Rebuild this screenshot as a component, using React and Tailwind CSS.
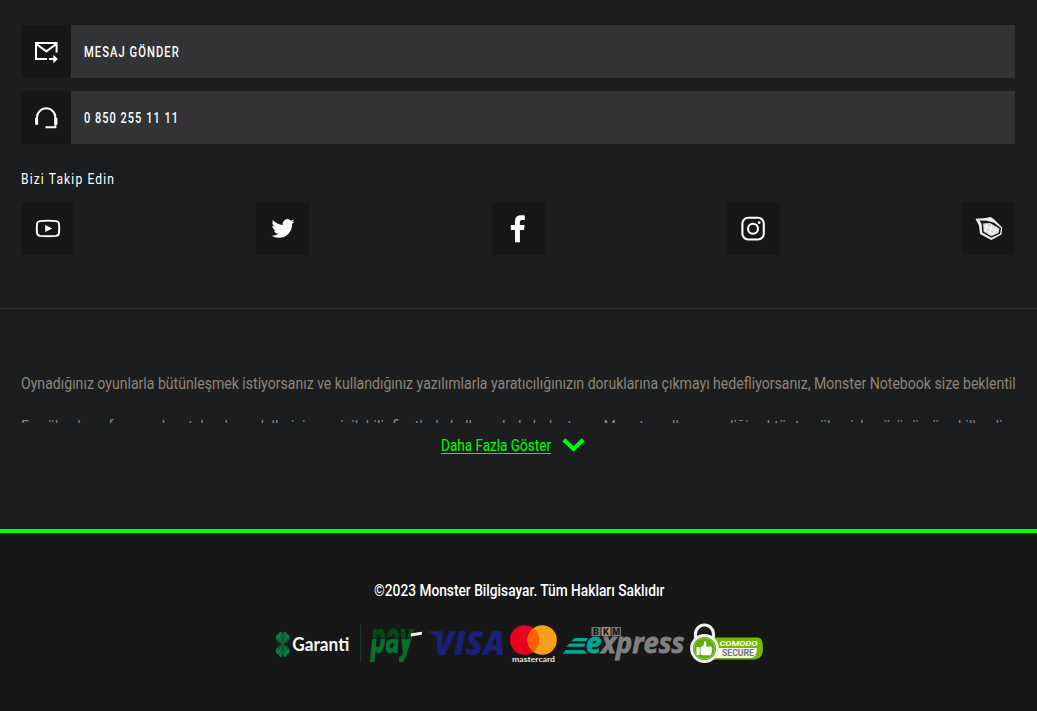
import { useLayoutEffect, useRef } from "react";

// Condenses a single line of text to the width of its box.
function Fit({ children, className = "", textClass = "" }) {
  const box = useRef(null);
  const text = useRef(null);
  useLayoutEffect(() => {
    const s = box.current.clientWidth / text.current.offsetWidth;
    text.current.style.transform = `scaleX(${s})`;
  }, []);
  return (
    <div ref={box} className={`shrink-0 whitespace-nowrap ${className}`}>
      <span ref={text} className={`inline-block origin-left ${textClass}`}>{children}</span>
    </div>
  );
}

function MailIcon() {
  return (
    <svg className="h-[26px] w-[26px]" viewBox="0 -0.5 26 26" fill="none" stroke="#fff" strokeWidth="2">
      <path d="M14 19.500H3V3.500H23.600V13M3 4.300l10.300 7.600L23.600 4.300" />
      <path d="M16 19.500h5" />
      <path d="M20.300 15.200l4.600 4.300-4.600 4.300z" fill="#fff" stroke="none" />
    </svg>
  );
}

function HeadsetIcon() {
  return (
    <svg className="h-[26px] w-[26px]" viewBox="0 -0.5 26 26" fill="none" stroke="#fff" strokeWidth="2">
      <path d="M4 15v-3a9.200 9.200 0 0 1 18.400 0v9.700H12.500" />
      <path d="M3.600 12.500v6.800M22.900 12.500v6.800" strokeWidth="3" />
    </svg>
  );
}

function YoutubeIcon() {
  return (
    <svg className="h-[26px] w-[26px]" viewBox="0 0.5 26 26">
      <path d="M5 5.600Q13 4.600 21 5.600Q23.800 5.900 24 8.500Q24.500 13 24 17.400Q23.800 20 21 20.400Q13 21.200 5 20.400Q2.300 20 2 17.400Q1.500 13 2 8.500Q2.300 5.900 5 5.600Z" fill="none" stroke="#fff" strokeWidth="1.900" />
      <path d="M10.200 9.400l7 3.600-7 3.600z" fill="#fff" />
    </svg>
  );
}

function TwitterIcon() {
  return (
    <svg className="h-[23px] w-[23px]" viewBox="-0.5 0 24 24" fill="#fff">
      <path d="M23.953 4.57a10 10 0 01-2.825.775 4.958 4.958 0 002.163-2.723c-.951.555-2.005.959-3.127 1.184a4.92 4.92 0 00-8.384 4.482C7.69 8.095 4.067 6.13 1.64 3.162a4.822 4.822 0 00-.666 2.475c0 1.71.87 3.213 2.188 4.096a4.904 4.904 0 01-2.228-.616v.06a4.923 4.923 0 003.946 4.827 4.996 4.996 0 01-2.212.085 4.936 4.936 0 004.604 3.417 9.867 9.867 0 01-6.102 2.105c-.39 0-.779-.023-1.17-.067a13.995 13.995 0 007.557 2.209c9.053 0 13.998-7.496 13.998-13.985 0-.21 0-.42-.015-.63A9.935 9.935 0 0024 4.59z" />
    </svg>
  );
}

function FacebookIcon() {
  return (
    <svg className="h-[28px] w-[16px]" viewBox="0 0.5 16 28" fill="#fff">
      <path d="M5 27.800V15.600H.8v-5H5V7C5 2.800 7.200.8 11 .8c1.700 0 3 .1 3.800.2v4.400h-2.500c-2 0-2.400 1-2.400 2.400v2.800h4.700l-.6 5H9.900v12.200z" />
    </svg>
  );
}

function InstagramIcon() {
  return (
    <svg className="h-[26px] w-[26px]" viewBox="0 0.5 26 26" fill="none" stroke="#fff" strokeWidth="2.100">
      <rect x="2.400" y="2.200" width="21.400" height="21.800" rx="5.800" />
      <circle cx="13" cy="13.200" r="5" />
      <circle cx="19.200" cy="7.100" r="1.400" fill="#fff" stroke="none" />
    </svg>
  );
}

function MonsterIcon() {
  return (
    <svg className="h-[26px] w-[28px]" viewBox="0 0.8 28 26">
      <path d="M.5 3.500L9 3.100 15.600 1.900 19 4 27.200 12.300 26.500 19.200 16.300 24.700 5 18.800 4 10.500Z" fill="#eee" />
      <path d="M4.500 5.200L12 5.500 19 7.500 26 12.800 25 18.600 16.300 22.500 7.200 17.400 6.600 8.700Z" fill="#171717" />
      <path d="M8 8.400L15 7.900 24.400 13.200 23.600 17.800 16.300 21 8.700 16.600Z" fill="#d9d9d9" />
      <path d="M9 10.500l14 5.500M9.500 14l9 5M12 8.500l-2 8M17 9.500l-3 10M21.500 12l-3 7" fill="none" stroke="#fff" strokeWidth=".9" />
    </svg>
  );
}

function Garanti() {
  return (
    <svg className="h-[42px] w-[88px]" viewBox="274 622 88 42">
      <defs>
        <linearGradient id="leaf" x1="0" y1="0" x2="0" y2="1">
          <stop offset="0" stopColor="#0d7d48" />
          <stop offset="1" stopColor="#054326" />
        </linearGradient>
      </defs>
      <g fill="url(#leaf)">
        {[33, 147, 213, 327].map((a) => (
          <g key={a} transform={`translate(282.700 644.300) scale(.92 1.400) rotate(${a})`}>
            <path d="M0 0C-3-2.500-5-6-3.500-8.500Q-1.500-10 0-8.500Q1.500-10 3.500-8.500C5-6 3-2.500 0 0Z" />
          </g>
        ))}
      </g>
      <path d="M278 635l9.500 18M287.500 635l-9.500 18" stroke="#4c9a68" strokeWidth=".6" opacity=".7" />
      <text x="292.300" y="651" fontFamily="Lato, sans-serif" fontWeight="700" fontSize="19.500" fill="#f4f4f4" textLength="57" lengthAdjust="spacingAndGlyphs">Garanti</text>
      <path d="M360.500 625v37" stroke="#123c26" strokeWidth="1" />
    </svg>
  );
}

function Pay() {
  return (
    <svg className="h-[42px] w-[62px] overflow-visible" viewBox="365 622 62 42">
      <defs>
        <linearGradient id="payFill" gradientUnits="userSpaceOnUse" x1="0" y1="-20" x2="0" y2="0">
          <stop offset=".5" stopColor="#004b18" />
          <stop offset=".52" stopColor="#03702d" />
        </linearGradient>
      </defs>
      <g transform="translate(371 652.500) scale(1 1.480)">
        <text x="0" y="0" fontFamily="Roboto, sans-serif" fontWeight="900" fontStyle="italic" fontSize="30" fill="url(#payFill)" textLength="42" lengthAdjust="spacingAndGlyphs">pay</text>
      </g>
      <path d="M371 638.200h40" stroke="#171717" strokeWidth=".9" />
      <path d="M411 633.200l11.200-1.400-.5 3-11 1.700z" fill="#f4f4f4" />
    </svg>
  );
}

function Visa() {
  return (
    <svg className="h-[42px] w-[80px] overflow-visible" viewBox="427 622 80 42">
      <path d="M428 631.300H438Q440 631.500 440.600 634L441.500 643Q436 634 428 632Z" fill="#1a1f78" />
      <text x="434" y="655.300" fontFamily="Open Sans, sans-serif" fontWeight="800" fontStyle="italic" fontSize="33.500" fill="#1a1f78" textLength="71" lengthAdjust="spacingAndGlyphs">VISA</text>
    </svg>
  );
}

function Mastercard() {
  return (
    <svg className="h-[42px] w-[52px]" viewBox="507 622 52 42">
      <circle cx="524.700" cy="640" r="14.700" fill="#eb001b" />
      <circle cx="542.200" cy="640" r="14.700" fill="#f79e1b" />
      <path d="M533.450 628.200a14.700 14.700 0 0 1 0 23.600a14.700 14.700 0 0 1 0-23.600z" fill="#ff5f00" />
      <text x="512" y="661.500" fontFamily="Lato, sans-serif" fontWeight="700" fontSize="7.800" fill="#e4e4e4" textLength="43" lengthAdjust="spacingAndGlyphs">mastercard</text>
    </svg>
  );
}

function BkmExpress() {
  return (
    <svg className="h-[42px] w-[127px] overflow-visible" viewBox="559 622 127 42">
      <rect x="591.500" y="627" width="9" height="9" fill="#777" />
      <rect x="601.500" y="627" width="9" height="9" fill="#bd9160" />
      <rect x="611.500" y="627" width="9.500" height="9" fill="#777" />
      <g fontFamily="Roboto, sans-serif" fontWeight="900" fontSize="9" fill="#171717" textAnchor="middle">
        <text x="596" y="634.700">B</text>
        <text x="606" y="634.700">K</text>
        <text x="616.300" y="634.700">M</text>
      </g>
      <path d="M574.500 638H588l-2 3.300H571.500ZM569.500 643.500H585l-.6 3.200H566.500ZM565.500 650H584l3 3.700H563Z" fill="#00a797" />
      <g fontFamily="Open Sans, sans-serif" fontWeight="700" fontStyle="italic" fontSize="28.500" strokeWidth=".8">
        <text x="586" y="653.300" fill="#00a797" stroke="#00a797" textLength="15.500" lengthAdjust="spacingAndGlyphs">e</text>
        <text x="601.500" y="653.300" fill="#808080" stroke="#808080" textLength="83" lengthAdjust="spacingAndGlyphs">xpress</text>
      </g>
    </svg>
  );
}

function Comodo() {
  return (
    <svg className="h-[42px] w-[78px]" viewBox="686 622 78 42">
      <path d="M695.500 642V634a9 9 0 0 1 18 0v8" fill="none" stroke="#efefef" strokeWidth="3.200" />
      <path d="M705 637.500h53q5 0 5 10.500 0 11.500-10 11.500H705z" fill="#76b900" />
      <path d="M715 648h42q0 10-7 10H715z" fill="#f2f2f2" />
      <circle cx="704.500" cy="648.500" r="13" fill="#5eae13" stroke="#f2f2f2" strokeWidth="2.800" />
      <circle cx="704.500" cy="648.500" r="10.500" fill="none" stroke="#91cf3c" strokeWidth="1" />
      <path d="M696.500 647h3.200v8h-3.200zM700.500 647.500l3-2 .8-4.500q2.200 0 2.200 2.500l-.5 3h5q1.500.4 1.300 1.800l-1 5.500q-.3 1.500-1.800 1.500h-6l-3-.8z" fill="#fff" />
      <g fontFamily="Roboto, sans-serif" fontWeight="700">
        <text x="719.500" y="645.800" fontSize="7.500" fontStyle="italic" fill="#fff" textLength="38" lengthAdjust="spacingAndGlyphs">COMODO</text>
        <text x="722" y="656.200" fontSize="9.500" fill="#777" textLength="32" lengthAdjust="spacingAndGlyphs">SECURE</text>
      </g>
    </svg>
  );
}

function ContactRow({ icon, children }) {
  return (
    <a className="flex h-[53px] bg-[#323334]">
      <span className="flex w-[50px] items-center justify-center bg-[#171717]">{icon}</span>
      <span className="flex items-center pl-[13px] text-sm font-medium tracking-[1.3px]">{children}</span>
    </a>
  );
}

const socials = [YoutubeIcon, TwitterIcon, FacebookIcon, InstagramIcon, MonsterIcon];

export default function App() {
  return (
    <div className="flex h-[711px] w-full flex-col overflow-hidden bg-[#1c1d1e] font-['Roboto','Noto_Sans',sans-serif] text-white">
      <section className="flex h-[309px] shrink-0 flex-col border-b border-[#303132] pl-[21px] pr-[22px] pt-[25px]">
        <div className="flex flex-col gap-[13px]">
          <ContactRow icon={<MailIcon />}>
            <Fit className="w-[96px]">MESAJ GÖNDER</Fit>
          </ContactRow>
          <ContactRow icon={<HeadsetIcon />}>
            <Fit className="w-[95px]">0 850 255 11 11</Fit>
          </ContactRow>
        </div>
        <Fit className="mt-[25px] w-[94px] text-sm leading-5 tracking-[1.3px]">Bizi Takip Edin</Fit>
        <div className="mt-[13px] flex justify-between">
          {socials.map((Icon, i) => (
            <a key={i} className="flex size-[53px] items-center justify-center bg-[#171717]">
              <Icon />
            </a>
          ))}
        </div>
      </section>

      <section className="flex h-[220px] shrink-0 flex-col pl-[21px] pt-[53px]">
        <div className="h-[61px] overflow-hidden text-[17px] leading-[43px] text-[#8c857b]">
          <Fit className="w-[995px]">Oynadığınız oyunlarla bütünleşmek istiyorsanız ve kullandığınız yazılımlarla yaratıcılığınızın doruklarına çıkmayı hedefliyorsanız, Monster Notebook size beklentil</Fit>
          <Fit className="w-[986px]">En yüksek performanslı notebook modellerini en erişilebilir fiyatlarla kullanıcılarla buluşturan Monster, yılların verdiği sektör tecrübesiyle görünümü şekillendir</Fit>
        </div>
        <button className="mt-[10px] flex h-6 items-center self-center pr-[33px] text-[#00ff00]">
          <Fit className="w-[110px] text-[17px] leading-6" textClass="underline underline-offset-2">Daha Fazla Göster</Fit>
          <svg className="ml-[11px] h-[14px] w-[23px]" viewBox="0 0 23 14" fill="none" stroke="#00ff00" strokeWidth="4">
            <path d="M1.800 1.800L11.500 11 21.200 1.800" />
          </svg>
        </button>
      </section>

      <footer className="flex flex-1 flex-col items-center border-t-4 border-[#00ff00] bg-[#171717] pt-[45px]">
        <Fit className="w-[290px] text-[17px] font-medium leading-6">©2023 Monster Bilgisayar. Tüm Hakları Saklıdır</Fit>
        <div className="mt-5 flex w-[490px]">
          <Garanti />
          <div className="ml-[3px]"><Pay /></div>
          <Visa />
          <Mastercard />
          <BkmExpress />
          <Comodo />
        </div>
      </footer>
    </div>
  );
}
